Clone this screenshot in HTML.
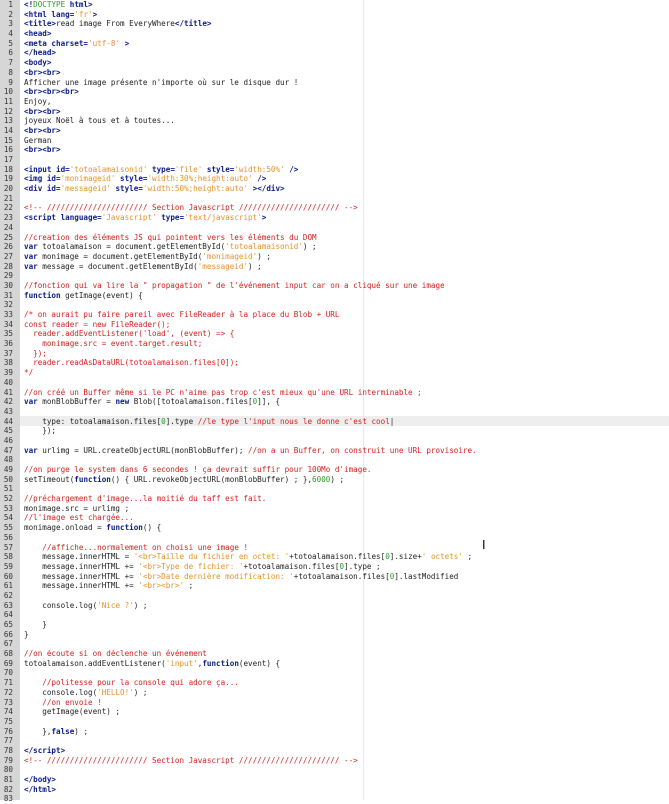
<!DOCTYPE html>
<html><head><meta charset="utf-8"><style>
body{margin:0;background:#fff;width:669px;height:800px;overflow:hidden;position:relative}
#g{position:absolute;left:0;top:0;width:20px;height:800px;background:#d6d6d6}
#vl{position:absolute;left:363px;top:0;width:1px;height:800px;background:#e4eee4}
#hl{position:absolute;left:20px;top:416px;width:649px;height:10px;background:#eeeeee}
pre{margin:0;position:absolute;top:0;font-family:"DejaVu Sans Mono","Liberation Mono",monospace;font-size:7.6px;line-height:9.69px;color:#222}
#n{left:0;width:13px;text-align:right;color:#333}
#c{left:24px}
.t{color:#0a1a8a;font-weight:bold}.s{color:#e6922a}.m{color:#d42020}.k{color:#0a1a8a;font-weight:bold}.d{color:#2a9a2a}
#cur{position:absolute;left:482px;top:538px;font-family:"DejaVu Sans";font-size:12px;color:#000}
</style></head><body>
<div id="g"></div><div id="hl"></div><div id="vl"></div>
<pre id="n">1
2
3
4
5
6
7
8
9
10
11
12
13
14
15
16
17
18
19
20
21
22
23
24
25
26
27
28
29
30
31
32
33
34
35
36
37
38
39
40
41
42
43
44
45
46
47
48
49
50
51
52
53
54
55
56
57
58
59
60
61
62
63
64
65
66
67
68
69
70
71
72
73
74
75
76
77
78
79
80
81
82
83</pre>
<pre id="c"><span class="t">&lt;!</span><span class="d">DOCTYPE</span> <span class="t">html&gt;</span>
<span class="t">&lt;html lang=</span><span class="s">'fr'</span><span class="t">&gt;</span>
<span class="t">&lt;title&gt;</span>read image From EveryWhere<span class="t">&lt;/title&gt;</span>
<span class="t">&lt;head&gt;</span>
<span class="t">&lt;meta charset=</span><span class="s">'utf-8'</span> <span class="t">&gt;</span>
<span class="t">&lt;/head&gt;</span>
<span class="t">&lt;body&gt;</span>
<span class="t">&lt;br&gt;&lt;br&gt;</span>
Afficher une image présente n'importe où sur le disque dur !
<span class="t">&lt;br&gt;&lt;br&gt;&lt;br&gt;</span>
Enjoy,
<span class="t">&lt;br&gt;&lt;br&gt;</span>
joyeux Noël à tous et à toutes...
<span class="t">&lt;br&gt;&lt;br&gt;</span>
German
<span class="t">&lt;br&gt;&lt;br&gt;</span>

<span class="t">&lt;input id=</span><span class="s">'totoalamaisonid'</span> <span class="t">type=</span><span class="s">'file'</span> <span class="t">style=</span><span class="s">'width:50%'</span> <span class="t">/&gt;</span>
<span class="t">&lt;img id=</span><span class="s">'monimageid'</span> <span class="t">style=</span><span class="s">'width:30%;height:auto'</span> <span class="t">/&gt;</span>
<span class="t">&lt;div id=</span><span class="s">'messageid'</span> <span class="t">style=</span><span class="s">'width:50%;height:auto'</span> <span class="t">&gt;&lt;/div&gt;</span>

<span class="m">&lt;!-- ////////////////////// Section Javascript ////////////////////// --&gt;</span>
<span class="t">&lt;script language=</span><span class="s">'Javascript'</span> <span class="t">type=</span><span class="s">'text/javascript'</span><span class="t">&gt;</span>

<span class="m">//creation des éléments JS qui pointent vers les éléments du DOM</span>
<span class="k">var</span> totoalamaison = document.getElementById(<span class="s">'totoalamaisonid'</span>) ;
<span class="k">var</span> monimage = document.getElementById(<span class="s">'monimageid'</span>) ;
<span class="k">var</span> message = document.getElementById(<span class="s">'messageid'</span>) ;

<span class="m">//fonction qui va lire la " propagation " de l'événement input car on a cliqué sur une image</span>
<span class="k">function</span> getImage(event) {

<span class="m">/* on aurait pu faire pareil avec FileReader à la place du Blob + URL
const reader = new FileReader();
  reader.addEventListener('load', (event) =&gt; {
    monimage.src = event.target.result;
  });
  reader.readAsDataURL(totoalamaison.files[0]);
*/</span>

<span class="m">//on créé un Buffer même si le PC n'aime pas trop c'est mieux qu'une URL interminable ;</span>
<span class="k">var</span> monBlobBuffer = <span class="k">new</span> Blob([totoalamaison.files[<span class="d">0</span>]], {

    type: totoalamaison.files[<span class="d">0</span>].type <span class="m">//le type l'input nous le donne c'est cool</span>|
    });

<span class="k">var</span> urlimg = URL.createObjectURL(monBlobBuffer); <span class="m">//on a un Buffer, on construit une URL provisoire.</span>

<span class="m">//on purge le system dans 6 secondes ! ça devrait suffir pour 100Mo d'image.</span>
setTimeout(<span class="k">function</span>() { URL.revokeObjectURL(monBlobBuffer) ; },<span class="d">6000</span>) ;

<span class="m">//préchargement d'image...la moitié du taff est fait.</span>
monimage.src = urlimg ;
<span class="m">//l'image est chargée...</span>
monimage.onload = <span class="k">function</span>() {

    <span class="m">//affiche...normalement on choisi une image !</span>
    message.innerHTML = <span class="s">'&lt;br&gt;Taille du fichier en octet: '</span>+totoalamaison.files[<span class="d">0</span>].size+<span class="s">' octets'</span> ;
    message.innerHTML += <span class="s">'&lt;br&gt;Type de fichier: '</span>+totoalamaison.files[<span class="d">0</span>].type ;
    message.innerHTML += <span class="s">'&lt;br&gt;Date dernière modification: '</span>+totoalamaison.files[<span class="d">0</span>].lastModified
    message.innerHTML += <span class="s">'&lt;br&gt;&lt;br&gt;'</span> ;

    console.log(<span class="s">'Nice ?'</span>) ;

    }
}

<span class="m">//on écoute si on déclenche un événement</span>
totoalamaison.addEventListener(<span class="s">'input'</span>,<span class="k">function</span>(event) {

    <span class="m">//politesse pour la console qui adore ça...</span>
    console.log(<span class="s">'HELLO!'</span>) ;
    <span class="m">//on envoie !</span>
    getImage(event) ;

    },<span class="k">false</span>) ;

<span class="t">&lt;/script&gt;</span>
<span class="m">&lt;!-- ////////////////////// Section Javascript ////////////////////// --&gt;</span>

<span class="t">&lt;/body&gt;</span>
<span class="t">&lt;/html&gt;</span>
</pre>
<div id="cur">I</div>
</body></html>
